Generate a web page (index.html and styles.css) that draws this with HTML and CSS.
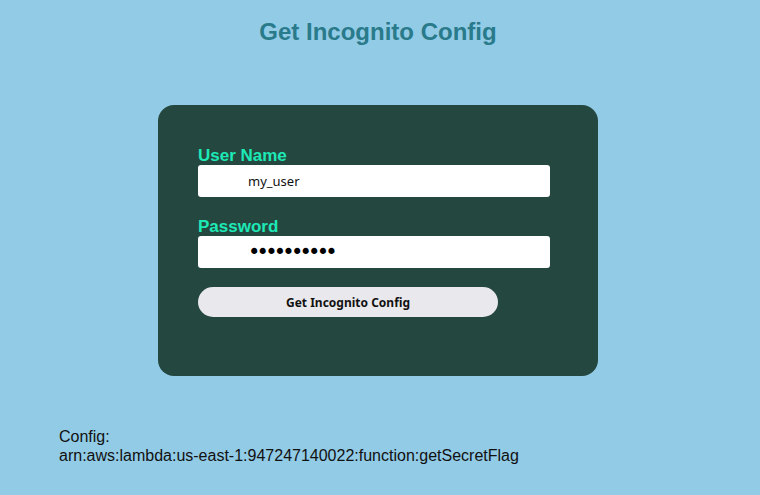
FILE: index.html
```html
<!DOCTYPE html>
<html>
<head>
<meta charset="utf-8">
<link rel="stylesheet" href="styles.css">
</head>
<body>
<h1 class="title">Get Incognito Config</h1>
<div class="card">
  <form class="form">
    <label class="label" for="user">User Name</label>
    <input class="field" id="user" type="text" value="my_user">
    <label class="label label-second" for="pass">Password</label>
    <input class="field field-pass" id="pass" type="password" value="abcdefghij">
    <button class="btn" type="button">Get Incognito Config</button>
  </form>
</div>
<div class="result">Config:<br>arn:aws:lambda:us-east-1:947247140022:function:getSecretFlag</div>
</body>
</html>
```
FILE: styles.css
```css
html, body {
  margin: 0;
  padding: 0;
}
body {
  background: #92cbe6;
  font-family: "Liberation Sans", Arial, sans-serif;
  width: 756px;
  height: 495px;
  overflow: hidden;
}
.title {
  margin: 0;
  padding-top: 18px;
  text-align: center;
  font-size: 24px;
  line-height: 28px;
  font-weight: bold;
  color: #297a8a;
}
.card {
  width: 440px;
  height: 271px;
  box-sizing: border-box;
  margin: 59px auto 0;
  background: #244740;
  border-radius: 16px;
  padding: 40px 40px 0;
}
.form {
  display: flex;
  flex-direction: column;
  align-items: flex-start;
}
.label {
  display: block;
  color: #1de9b6;
  font-size: 17px;
  font-weight: bold;
  line-height: 20px;
  position: relative;
  top: 1px;
}
.label-second {
  margin-top: 19px;
}
.field {
  box-sizing: border-box;
  width: 352px;
  height: 32px;
  margin: 0;
  border: none;
  border-radius: 3px;
  background: #ffffff;
  padding: 0 0 0 50px;
  font-family: "Noto Sans", sans-serif;
  font-size: 13px;
  color: #111;
  outline: none;
}
.field-pass {
  font-family: "DejaVu Sans", sans-serif;
  font-size: 21px;
  color: #000;
  letter-spacing: -3.8px;
}
.btn {
  margin-top: 19px;
  width: 300px;
  height: 30px;
  border: none;
  border-radius: 15px;
  background: #e9e8ed;
  font-family: "Noto Sans", sans-serif;
  font-weight: bold;
  font-size: 12px;
  color: #111;
  padding: 0;
}
.result {
  margin-top: 51px;
  padding-left: 59px;
  font-size: 16px;
  line-height: 19px;
  color: #111;
}
```
